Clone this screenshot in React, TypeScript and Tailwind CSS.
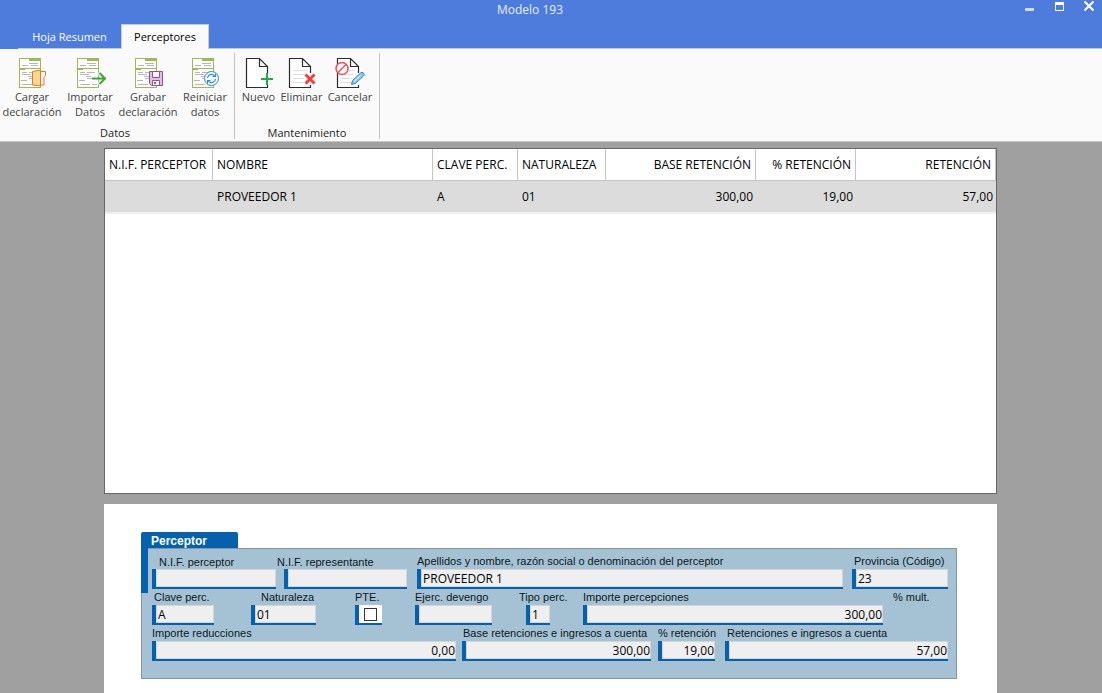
import { useState } from "react";
import type { ReactNode } from "react";
import clsx from "clsx";

type Row = {
  nif: string;
  nombre: string;
  clave: string;
  naturaleza: string;
  base: string;
  porcentaje: string;
  retencion: string;
};

const rows: Row[] = [
  {
    nif: "",
    nombre: "PROVEEDOR 1",
    clave: "A",
    naturaleza: "01",
    base: "300,00",
    porcentaje: "19,00",
    retencion: "57,00",
  },
];

const columns: { key: keyof Row; title: string; width: string; right?: boolean }[] = [
  { key: "nif", title: "N.I.F. PERCEPTOR", width: "w-[108px]" },
  { key: "nombre", title: "NOMBRE", width: "" },
  { key: "clave", title: "CLAVE PERC.", width: "w-[85px]" },
  { key: "naturaleza", title: "NATURALEZA", width: "w-[88px]" },
  { key: "base", title: "BASE RETENCIÓN", width: "w-[150px]", right: true },
  { key: "porcentaje", title: "% RETENCIÓN", width: "w-[100px]", right: true },
  { key: "retencion", title: "RETENCIÓN", width: "w-[140px]", right: true },
];

// green form sheet shared by the "Datos" icons
function FormIcon({ children }: { children: ReactNode }) {
  return (
    <svg width="32" height="32" viewBox="0 0 32 32" fill="none">
      <rect x="3.5" y="1.5" width="21" height="29" fill="#fff" stroke="#9bbb50" />
      <path d="M3 11.500h22" stroke="#9bbb50" />
      <path d="M13 2.500h11" stroke="#9bbb50" strokeWidth="3" />
      <path d="M4 12.500h5" stroke="#9bbb50" />
      <path
        d="M13 6.500h9M6 8.500h6M15 8.500h7M6 15.500h5M13 15.500h8M6 17.500h9M12 19.500h5M5 23.500h6M13 21.500h7M6 27.500h10M18 27.500h5"
        stroke="#b9b5ba"
      />
      {children}
    </svg>
  );
}

function PageIcon({ lines, children }: { lines?: boolean; children: ReactNode }) {
  return (
    <svg width="32" height="32" viewBox="0 0 32 32" fill="none">
      <path d="M3.500 1.500h13l8 8v21h-21z" fill="#fff" />
      <path
        d="M24.500 16V9.500l-8-8h-13v29h21V28M16.500 1.500v8h8"
        stroke="#2b2b2b"
        strokeWidth="1.200"
      />
      {lines && (
        <path d="M7 13.500h13M7 17.500h12M7 21.500h11M7 25.500h11" stroke="#dedede" />
      )}
      {children}
    </svg>
  );
}

function CargarIcon() {
  return (
    <FormIcon>
      <path d="M16.500 14.500l8-1.500v16l-8-1z" fill="#fbd88d" stroke="#e8762c" />
      <path d="M24.500 14.500h5v4l-1.500 2v7.500h-3.500z" fill="#fafafa" stroke="#e8762c" />
    </FormIcon>
  );
}

function ImportarIcon() {
  return (
    <FormIcon>
      <path d="M25 15.500l6 6-6 6" stroke="#fafafa" strokeWidth="4" />
      <path d="M18 21.500h13M25.500 16l5.500 5.500-5.500 5.500" stroke="#3fa535" strokeWidth="2" />
    </FormIcon>
  );
}

function GrabarIcon() {
  return (
    <FormIcon>
      <path d="M17.500 14.500h13v14h-11l-2-2z" fill="#e0bfdf" stroke="#9b4a9b" />
      <path d="M20.500 14.500h7v6h-7z" fill="#fafafa" stroke="#9b4a9b" />
      <path d="M20.500 28.500v-5h7v5z" fill="#fff" stroke="#9b4a9b" />
      <path d="M22 25h2v2h-2z" fill="#9b4a9b" />
    </FormIcon>
  );
}

function ReiniciarIcon() {
  return (
    <FormIcon>
      <circle cx="22.500" cy="21.500" r="7" fill="#fafafa" stroke="#2a8fcb" />
      <path
        d="M18.500 21a4 4 0 0 1 7-2.200M26.500 22a4 4 0 0 1-7 2.200M26.500 16.500v3h-3M18.500 26.500v-3h3"
        stroke="#2a8fcb"
        strokeWidth="1.200"
      />
    </FormIcon>
  );
}

function NuevoIcon() {
  return (
    <PageIcon>
      <path d="M18 22h12M24 16v12" stroke="#fafafa" strokeWidth="4" />
      <path d="M18 22h12M24 16v12" stroke="#1faa4b" strokeWidth="2" />
    </PageIcon>
  );
}

function EliminarIcon() {
  return (
    <PageIcon lines>
      <path d="M19.500 17.500l9 9M28.500 17.500l-9 9" stroke="#ef4136" strokeWidth="3" />
    </PageIcon>
  );
}

function CancelarIcon() {
  return (
    <PageIcon lines>
      <circle cx="8" cy="11.500" r="6" fill="#fafafa" stroke="#f0504f" strokeWidth="1.500" />
      <path d="M4 15.500l8-8" stroke="#f0504f" strokeWidth="1.500" />
      <path
        d="M17.500 27.500l1-4 8-7.500q1.500-1.500 3 0t0 3l-8 7.500z"
        fill="#8cc6ec"
        stroke="#2a8fcb"
      />
      <path d="M20 24.500l6.500-6" stroke="#fafafa" />
    </PageIcon>
  );
}

function RibbonButton({ icon, label, className }: { icon: ReactNode; label: string; className: string }) {
  return (
    <button
      className={clsx(
        "flex flex-col items-center text-center text-[11px] leading-[15px] text-[#444] whitespace-pre-line hover:bg-[#e8eefb]",
        className,
      )}
    >
      {icon}
      {label}
    </button>
  );
}

function RibbonGroup({ title, className, children }: { title: string; className?: string; children: ReactNode }) {
  return (
    <div className={clsx("flex h-[86px] flex-col justify-between border-r border-[#c3c3c3]", className)}>
      <div className="flex items-start pt-1">{children}</div>
      <p className="text-center text-[11px] leading-3 text-[#222]">{title}</p>
    </div>
  );
}

type FieldProps = {
  id: string;
  label: string;
  value?: string;
  right?: boolean;
  className?: string;
  labelClass?: string;
  boxClass?: string;
};

function Field({ id, label, value = "", right, className, labelClass, boxClass }: FieldProps) {
  return (
    <div className={clsx("flex min-w-0 flex-col", className)}>
      <label
        htmlFor={id}
        className={clsx(
          "h-4 font-['Liberation_Sans'] text-[11px] leading-4 whitespace-nowrap text-[#0c1820]",
          labelClass,
        )}
      >
        {label}
      </label>
      <div className={clsx("flex h-5 border-b-2 border-l-4 border-[#0560ae]", boxClass)}>
        <input
          id={id}
          type="text"
          defaultValue={value}
          className={clsx(
            "w-full min-w-0 border border-[#d3d5d6] bg-[#efefef] pt-px text-[12px] leading-4 text-black outline-none",
            right ? "text-right" : "pl-px",
          )}
        />
      </div>
    </div>
  );
}

export default function App() {
  const [selected, setSelected] = useState(0);

  return (
    <div className="flex min-h-screen flex-col bg-[#a0a0a0] font-['Open_Sans','Noto_Sans',sans-serif]">
      <header className="bg-[#4d7cdc]">
        <div className="flex h-6 items-start pr-2">
          <h1 className="flex-1 pl-9 text-center text-[12px] leading-5 text-[#e8effc]">
            Modelo 193
          </h1>
          <div className="flex gap-5">
            <button aria-label="Minimizar" className="h-3 w-[10px]">
              <svg width="10" height="12" viewBox="0 0 10 12">
                <path d="M1 8h9v3H1z" fill="#d9d9d9" />
              </svg>
            </button>
            <button aria-label="Maximizar" className="h-3 w-[10px]">
              <svg width="10" height="12" viewBox="0 0 10 12">
                <path d="M1 2h9v9H1zM2 5v5h7V5z" fill="#fff" fillRule="evenodd" />
              </svg>
            </button>
            <button aria-label="Cerrar" className="h-3 w-[10px]">
              <svg width="10" height="12" viewBox="0 0 10 12">
                <path d="M.5 1.500l9 9M9.500 1.500l-9 9" stroke="#fff" strokeWidth="2" />
              </svg>
            </button>
          </div>
        </div>
        <nav className="flex h-[25px] pl-[18px] text-[11px]">
          <button className="w-[103px] border-b border-[#c8cbd2] pt-[2px] text-white">Hoja Resumen</button>
          <button className="w-[88px] border border-b-0 border-[#c8cbd2] bg-[#fafafa] pt-px text-black">
            Perceptores
          </button>
          <div className="flex-1 border-b border-[#c8cbd2]" />
        </nav>
      </header>

      <div className="flex h-[93px] items-start border-b border-[#c6c6c6] bg-[#fafafa] pt-1">
        <RibbonGroup title="Datos" className="pr-1">
          <RibbonButton icon={<CargarIcon />} label={"Cargar\ndeclaración"} className="w-16" />
          <RibbonButton icon={<ImportarIcon />} label={"Importar\nDatos"} className="w-[52px]" />
          <RibbonButton icon={<GrabarIcon />} label={"Grabar\ndeclaración"} className="w-16" />
          <RibbonButton icon={<ReiniciarIcon />} label={"Reiniciar\ndatos"} className="w-[50px]" />
        </RibbonGroup>
        <RibbonGroup title="Mantenimiento" className="px-1">
          <RibbonButton icon={<NuevoIcon />} label="Nuevo" className="w-[39px]" />
          <RibbonButton icon={<EliminarIcon />} label="Eliminar" className="w-[47px]" />
          <RibbonButton icon={<CancelarIcon />} label="Cancelar" className="w-[50px]" />
        </RibbonGroup>
      </div>

      <main className="flex flex-1 flex-col gap-[10px] pt-[6px] pr-[105px] pl-[104px]">
        <section className="h-[346px] border border-[#666] bg-white">
          <table className="w-full table-fixed border-separate border-spacing-0 text-[12px] text-black">
            <thead>
              <tr className="h-8">
                {columns.map((col) => (
                  <th
                    key={col.key}
                    className={clsx(
                      "border-r border-b border-[#c4c4c4] px-1 font-normal whitespace-nowrap",
                      col.width,
                      col.right ? "text-right" : "text-left",
                    )}
                  >
                    {col.title}
                  </th>
                ))}
              </tr>
            </thead>
            <tbody>
              {rows.map((row, i) => (
                <tr
                  key={row.nombre}
                  onClick={() => setSelected(i)}
                  className={clsx("h-[33px]", selected === i && "bg-[#dcdcdc]")}
                >
                  {columns.map((col) => (
                    <td
                      key={col.key}
                      className={clsx(
                        "border-b-2 border-[#f0f0f0] whitespace-nowrap",
                        col.right ? "pr-[3px] text-right" : "pl-1",
                      )}
                    >
                      {row[col.key]}
                    </td>
                  ))}
                </tr>
              ))}
            </tbody>
          </table>
        </section>

        <section className="flex-1 bg-white pt-7 pr-10 pb-[14px] pl-[37px]">
          <h2 className="h-4 w-[97px] rounded-t-xs bg-[#0560ae] pl-[10px] font-['Liberation_Sans'] text-[12px] leading-[18px] font-bold text-white">
            Perceptor
          </h2>
          <form className="relative h-[131px] border border-[#82979f] bg-[#a4c2d3] pt-1 pr-2 pl-[10px]">
            <div className="absolute -top-px -left-px h-[45px] w-[7px] bg-[#0560ae]" />
            <div className="relative flex">
              <Field id="nif" label="N.I.F. perceptor" className="w-[124px]" labelClass="pt-px pl-[7px]" />
              <Field id="rep" label="N.I.F. representante" className="ml-2 w-[123px]" labelClass="-ml-[7px] pt-px" />
              <Field
                id="nombre"
                label="Apellidos y nombre, razón social o denominación del perceptor"
                value="PROVEEDOR 1"
                className="ml-[10px] flex-1"
              />
              <Field id="prov" label="Provincia (Código)" value="23" className="ml-[9px] w-24" labelClass="pl-[2px]" />
            </div>
            <div className="flex">
              <Field id="clave" label="Clave perc." value="A" className="w-[62px]" labelClass="pl-[2px]" />
              <Field id="nat" label="Naturaleza" value="01" className="ml-[37px] w-[65px]" labelClass="pl-[10px]" />
              <div className="ml-[39px] w-[27px]">
                <label
                  htmlFor="pte"
                  className="block h-4 font-['Liberation_Sans'] text-[11px] leading-4 text-[#0c1820]"
                >
                  PTE.
                </label>
                <div className="flex h-5 items-center justify-center border-b-2 border-l-4 border-[#0560ae] bg-white">
                  <input
                    id="pte"
                    type="checkbox"
                    className="h-[13px] w-[13px] appearance-none border border-[#333] bg-white checked:bg-[#0560ae]"
                  />
                </div>
              </div>
              <Field id="ejerc" label="Ejerc. devengo" className="ml-[33px] w-[77px]" />
              <Field
                id="tipo"
                label="Tipo perc."
                value="1"
                className="ml-[27px] w-[47px]"
                boxClass="ml-[7px] w-6"
              />
              <Field
                id="percep"
                label="Importe percepciones"
                value="300,00"
                right
                className="ml-[17px] flex-1"
              />
              <p className="ml-[10px] w-[55px] font-['Liberation_Sans'] text-[11px] leading-4 text-[#0c1820]">
                % mult.
              </p>
            </div>
            <div className="flex">
              <Field id="reduc" label="Importe reducciones" value="0,00" right className="flex-[304]" />
              <Field
                id="base"
                label="Base retenciones e ingresos a cuenta"
                value="300,00"
                right
                className="ml-[6px] flex-[189]"
                labelClass="pl-px"
              />
              <Field id="porc" label="% retención" value="19,00" right className="ml-[7px] w-[57px]" />
              <Field
                id="ret"
                label="Retenciones e ingresos a cuenta"
                value="57,00"
                right
                className="ml-[10px] flex-[223]"
                labelClass="pl-[2px]"
              />
            </div>
          </form>
        </section>
      </main>
    </div>
  );
}
